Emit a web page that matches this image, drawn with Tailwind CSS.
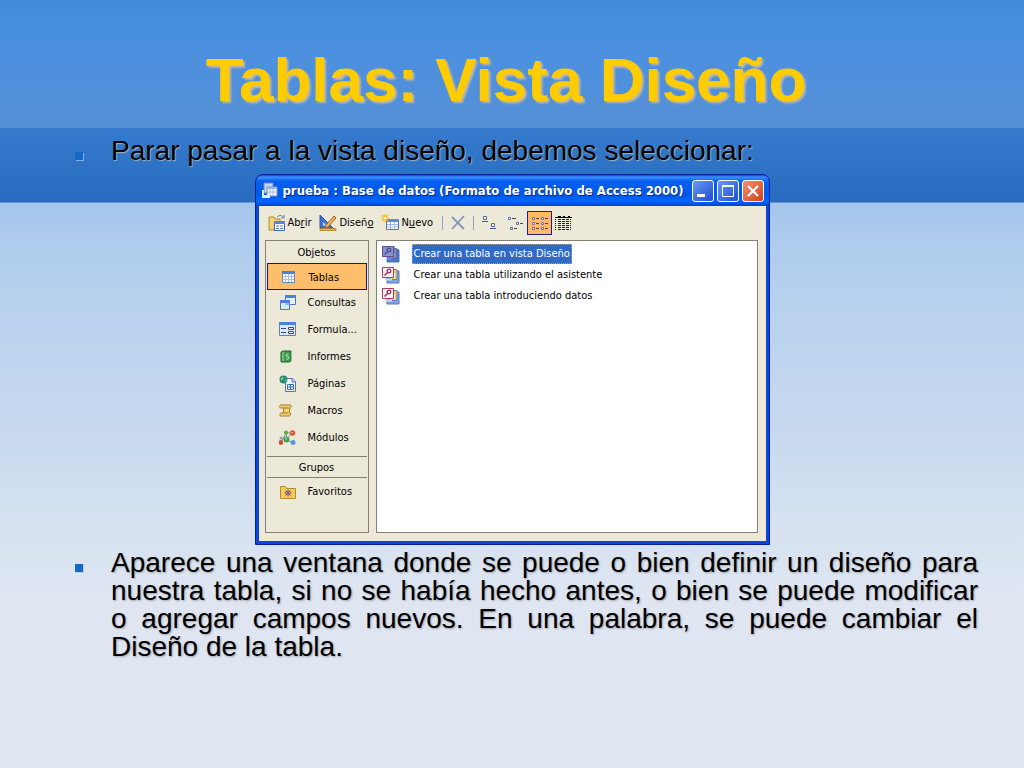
<!DOCTYPE html>
<html lang="es">
<head>
  <meta charset="UTF-8">
  <meta name="viewport" content="width=device-width, initial-scale=1.0">
  <title>Tablas: Vista Diseño</title>
  <script src="https://cdn.jsdelivr.net/npm/@tailwindcss/browser@4"></script>
</head>
<body class="min-h-screen overflow-x-hidden text-black font-['Liberation_Sans',Arial,sans-serif] bg-[linear-gradient(to_bottom,#428ada_0,#4a90e1_40px,#5590d6_128px,#367bce_128px,#286bbe_202px,#a6c5ec_203px,#b0cdee_250px,#c8d9ef_430px,#d6e2f0_530px,#dfe6f2_600px,#e0e6f2_100%)]">
  <!-- Shared icons -->
  <svg class="hidden" aria-hidden="true">
    <symbol id="wizard" viewBox="0 0 18 18">
      <path d="M5 5h12v12H5z" fill="#7ea4e4" stroke="#5478bc"/>
      <path d="M8 3.500h7v10H8z" fill="#f4cc60" stroke="#6c84b4"/>
      <path d="M8 8h5v4H8z" fill="#fffae8"/>
      <path d="M.500 1.500h11v10H.500z" fill="#fbf4f6" stroke="#b03a5c"/>
      <path d="M2.500 9.500l3-3" fill="none" stroke="#a02850" stroke-width="1.500"/>
      <circle cx="7" cy="5" r="1.800" fill="none" stroke="#a02850" stroke-width="1.300"/>
      <path d="M3 13.500h7" stroke="#c8d8f4" stroke-width="2"/>
    </symbol>
  </svg>

  <main class="pb-8">
    <!-- Slide title -->
    <h1 class="pt-10 pr-3 text-center text-[62px] leading-[80px] font-bold text-[#ffcc00] [text-shadow:2px_2px_2px_#c0b8a8]">Tablas: Vista Diseño</h1>

    <div class="pl-[75px] pr-[46px] pt-[17px]">
      <div class="flex items-start gap-7">
        <span class="mt-[15px] h-2 w-2 shrink-0 bg-[#1468c8] [box-shadow:1px_1px_0_#7fb0e6]"></span>
        <p class="text-[28px] leading-7 [text-shadow:1px_1px_1px_#a8b0b8]">Parar pasar a la vista diseño, debemos seleccionar:</p>
      </div>
    </div>

    <!-- Database window -->
    <section class="mx-auto mt-[9px] w-[515px] max-w-full rounded-t-lg border border-[#0420a0] bg-[#0a46d8] px-[3px] pb-[3px] font-['DejaVu_Sans_Condensed','DejaVu_Sans',sans-serif] text-[11px] leading-4">
      <header class="-mx-[3px] flex h-[31px] items-center rounded-t-[7px] bg-[linear-gradient(to_bottom,#0a48c8_0,#3a90ff_2px,#0860f0_6px,#0058e6_20px,#0066ff_26px,#0046c8_31px)] pl-[5px] pr-[5px] pt-px text-white">
        <svg class="h-[18px] w-[18px] shrink-0" viewBox="0 0 18 18">
          <path d="M3 1h9v10H3z" fill="#c4d4f0" stroke="#6f88b8"/>
          <path d="M6 5h10v9H6z" fill="#f4f7fc" stroke="#7890c0"/>
          <path d="M6 5h10v2H6z" fill="#98b4e4"/>
          <path d="M9 7v7M12 7v7M6 10h10" stroke="#a9bbdc"/>
          <path d="M1 8h2v8H1zM3 13h6v3H3z" fill="#e6ecf6"/>
        </svg>
        <h2 class="ml-1 flex-1 whitespace-nowrap text-[13px] font-bold [text-shadow:1px_1px_0_#0a2a80]">prueba : Base de datos (Formato de archivo de Access 2000)</h2>
        <div class="flex gap-[3px]">
          <button aria-label="Minimizar" class="h-[22px] w-[22px] rounded-[3px] border border-white bg-linear-to-br from-[#6c98f4] to-[#1c4cd0]">
            <svg viewBox="0 0 20 20"><path d="M4 13h8v3H4z" fill="#fff"/></svg>
          </button>
          <button aria-label="Maximizar" class="h-[22px] w-[22px] rounded-[3px] border border-white bg-linear-to-br from-[#6c98f4] to-[#1c4cd0]">
            <svg viewBox="0 0 20 20"><path d="M4.500 5v10.500h11V5M4 5h12" fill="none" stroke="#fff"/><path d="M4 4h12v2H4z" fill="#fff"/></svg>
          </button>
          <button aria-label="Cerrar" class="h-[22px] w-[22px] rounded-[3px] border border-white bg-linear-to-br from-[#f09070] to-[#d03c14]">
            <svg viewBox="0 0 20 20"><path d="M5 5l10 10M15 5L5 15" stroke="#fff" stroke-width="2.200"/></svg>
          </button>
        </div>
      </header>

      <div class="bg-[#ece9d8] pr-2 pb-2 pl-[6px]">
        <!-- Toolbar -->
        <div class="flex h-[34px] items-center pl-[3px]">
          <button class="flex items-center gap-[2px]">
            <svg class="h-[18px] w-[18px]" viewBox="0 0 18 18">
              <path d="M1 3h5l1 2h5v11H1z" fill="#f4d478" stroke="#b08a30"/>
              <path d="M9 3c2-2 5-2 6 0M16 1v3h-3" fill="none" stroke="#5878a8"/>
              <path d="M6.500 7.500h10v9h-10z" fill="#fff" stroke="#3c60b0"/>
              <path d="M6 7h11v3H6z" fill="#5a84d8"/>
              <path d="M8 12h3M12 12h3M8 14.500h3M12 14.500h3" stroke="#5a78b8"/>
            </svg>
            <span>Ab<u>r</u>ir</span>
          </button>
          <button class="ml-2 flex items-center gap-[2px]">
            <svg class="h-[18px] w-[18px]" viewBox="0 0 18 18">
              <path d="M1 1l13 13H1z" fill="#3f74d8" stroke="#2a50a8"/>
              <path d="M4 8l3.500 3.500H4z" fill="#c8daf8"/>
              <path d="M15 2l2 2-8 9-3 1 1-3z" fill="#f0b860" stroke="#a06420"/>
              <path d="M1 14.500h16v2H1z" fill="#eac04c" stroke="#a07820" stroke-width=".8"/>
            </svg>
            <span>Diseñ<u>o</u></span>
          </button>
          <button class="ml-2 flex items-center gap-[2px]">
            <svg class="h-[18px] w-[18px]" viewBox="0 0 18 18">
              <path d="M5.500 5.500h12v10h-12z" fill="#fff" stroke="#5078bc"/>
              <path d="M5 5h13v3H5z" fill="#5a8ae0"/>
              <path d="M9.500 8v7M13.500 8v7M6 10.500h11M6 13h11" stroke="#9bb8e8"/>
              <path d="M4 0v8M0 4h8M1 1l6 6M7 1L1 7" stroke="#f0b820" stroke-width="1.200"/>
              <circle cx="4" cy="4" r="1.500" fill="#fff8b0"/>
            </svg>
            <span>N<u>u</u>evo</span>
          </button>
          <span class="ml-[9px] h-[14px] w-px bg-[#8ca4cc]"></span>
          <button aria-label="Eliminar" class="ml-[7px]">
            <svg class="h-4 w-4" viewBox="0 0 16 16"><path d="M2 2l12 12M14 1L2 14" stroke="#8496b8" stroke-width="1.800"/></svg>
          </button>
          <span class="ml-[7px] h-[14px] w-px bg-[#8ca4cc]"></span>
          <button aria-label="Iconos grandes" class="ml-[7px]">
            <svg class="h-4 w-4" viewBox="0 0 16 16"><path d="M2.500 1.500h3v3h-3zM10.500 8.500h3v3h-3z" fill="#fff" stroke="#4a68b0"/><path d="M1 6.500h6M9 13.500h6" stroke="#4a5c88"/></svg>
          </button>
          <button aria-label="Iconos pequeños" class="ml-[10px]">
            <svg class="h-4 w-4" viewBox="0 0 16 16"><path d="M1.500 2.500h2v2h-2zM9.500 7.500h2v2h-2zM3.500 12.500h2v2h-2z" fill="#fff" stroke="#5a70b0"/><path d="M5 3.500h4M13 8.500h3M7 13.500h3" stroke="#444" /></svg>
          </button>
          <button aria-label="Lista" aria-pressed="true" class="ml-1 flex h-6 w-[25px] items-center justify-center border border-[#28207c] bg-[#fdb868]">
            <svg class="h-4 w-[18px]" viewBox="0 0 18 16"><path d="M1.500 2.500h2v2h-2zM10.500 2.500h2v2h-2zM1.500 7.500h2v2h-2zM10.500 7.500h2v2h-2zM1.500 12.500h2v2h-2zM10.500 12.500h2v2h-2z" fill="#fff" stroke="#766ca0"/><path d="M5 3.500h3M14 3.500h3M5 8.500h3M14 8.500h3M5 13.500h3M14 13.500h3" stroke="#5c4030"/></svg>
          </button>
          <button aria-label="Detalles" class="ml-[3px]">
            <svg class="h-4 w-[17px]" viewBox="0 0 17 16"><path d="M0 2.500h17" stroke="#000"/><path d="M3 1.500h3M8 1.500h2M13 1.500h2" stroke="#000"/><path d="M.500 4v11" stroke="#000" stroke-dasharray="1 1"/><path d="M3 4.500h13M3 6.500h13M3 8.500h13M3 10.500h13M3 12.500h13M3 14.500h13" stroke="#222" stroke-dasharray="3 1"/></svg>
          </button>
        </div>

        <div class="flex gap-[7px]">
          <!-- Object bar -->
          <nav class="flex h-[293px] w-[104px] flex-col border border-[#848078]">
            <h3 class="h-[22px] pt-1 text-center">Objetos</h3>
            <button class="mx-px flex h-[27px] items-center gap-3 border border-[#14148c] bg-[#ffbe6c] pt-[2px] pl-[13px]">
              <svg class="h-4 w-4" viewBox="0 0 16 16"><path d="M1.500 1.500h12v11h-12z" fill="#fff" stroke="#6484c0"/><path d="M1 1h13v3H1z" fill="#4c80dc"/><path d="M4.500 4v8M7.500 4v8M10.500 4v8M2 6.500h11M2 9.500h11" stroke="#a8c0ea"/></svg>
              Tablas
            </button>
            <div class="flex flex-col gap-[11px] pt-[5px]">
              <button class="flex h-4 items-center gap-[11px] pl-[13px]">
                <svg class="h-[18px] w-[18px]" viewBox="0 0 18 18"><path d="M6.500 1.500h10v9h-10z" fill="#eaf1fc" stroke="#5078bc"/><path d="M6 1h11v3H6z" fill="#4c80dc"/><path d="M1.500 6.500h9v9h-9z" fill="#d8e6fa" fill-opacity=".85" stroke="#5078bc"/><path d="M1 6h10v3H1z" fill="#4c80dc"/><path d="M6.500 9h4v2h-4z" fill="#90b4f0"/></svg>
                Consultas
              </button>
              <button class="flex h-4 items-center gap-[11px] pl-[13px]">
                <svg class="h-[18px] w-[18px]" viewBox="0 0 18 18"><path d="M.500 1.500h16v13H.500z" fill="#dce8fa" stroke="#6080b8"/><path d="M0 1h17v3H0z" fill="#4c80dc"/><path d="M2 7.500h5M2 11.500h5" stroke="#304c88"/><path d="M9.500 6.500h5v2h-5zM9.500 10.500h5v2h-5z" fill="#fff" stroke="#304c88"/></svg>
                Formula...
              </button>
              <button class="flex h-4 items-center gap-[11px] pl-[13px]">
                <svg class="h-[18px] w-[18px]" viewBox="0 0 18 18"><path d="M2 4l2-1h8v10l-2 1H2z" fill="#3d9c4c" stroke="#1c6428"/><path d="M4 4v9" stroke="#a6dca8"/><path d="M9.500 6c-3 0-3 2.500-1 2.500s2 3-1 2.500" fill="none" stroke="#e8f8d8"/><path d="M12.500 4v9" stroke="#a8b8a0"/></svg>
                Informes
              </button>
              <button class="flex h-4 items-center gap-[11px] pl-[13px]">
                <svg class="h-[18px] w-[18px]" viewBox="0 0 18 18"><path d="M6.500 3.500h7l3 3v10h-10z" fill="#f4f8fe" stroke="#5474b0"/><path d="M13 3.500v3.500h3.500" fill="#c8d8f4" stroke="#5474b0"/><path d="M8.500 9.500h6v5h-6zM11.500 9v6M8 12h7" fill="none" stroke="#4068bc"/><circle cx="4.500" cy="4.500" r="4" fill="#2c8c78"/><path d="M2 3c2-2 3 0 2 1s0 2-2 1M6 4l2 1-1 2z" fill="#80d090"/></svg>
                Páginas
              </button>
              <button class="flex h-4 items-center gap-[11px] pl-[13px]">
                <svg class="h-[18px] w-[18px]" viewBox="0 0 18 18"><path d="M2 3h9c2 0 1 3 0 3l-1 5h1c1 0 1 3-1 3H2c-2 0-1-3 0-3h2l1-5H2c-2 0-2-3 0-3z" fill="#f4d070" stroke="#a87820"/><path d="M5 6h5M4 11h5" stroke="#a87820"/></svg>
                Macros
              </button>
              <button class="flex h-4 items-center gap-[11px] pl-[13px]">
                <svg class="h-[18px] w-[18px]" viewBox="0 0 18 18"><path d="M2 14l5-10 7 0M2 9l5 2 6-7M7 4l1 7 6 3" fill="none" stroke="#8c8c98"/><circle cx="7" cy="3.500" r="2" fill="#58ac48"/><circle cx="13.500" cy="4" r="2.800" fill="#e05838"/><circle cx="1.800" cy="13.500" r="2.400" fill="#d84c34"/><circle cx="7.500" cy="10.500" r="3" fill="#48a050"/><circle cx="14" cy="13.500" r="2.500" fill="#5c94e0"/><circle cx="2" cy="9" r="1.500" fill="#80a4e0"/><circle cx="13" cy="3.500" r=".8" fill="#fcc8b8"/><circle cx="7" cy="9.500" r=".9" fill="#b8e8b0"/></svg>
                Módulos
              </button>
            </div>
            <h3 class="mx-px mt-[10px] h-[22px] border-y border-[#848078] pt-[3px] text-center">Grupos</h3>
            <button class="mt-[6px] flex h-4 items-center gap-[11px] pl-[13px]">
              <svg class="h-[18px] w-[18px]" viewBox="0 0 18 18"><path d="M1.500 3.500h5l1 2h9v10h-15z" fill="#f6cc58" stroke="#b88c28"/><path d="M9 6.500v7M5.500 10h7M6.500 7.500l5 5M11.500 7.500l-5 5" stroke="#344cb0"/><circle cx="9" cy="10" r="1.200" fill="#e04838"/></svg>
              Favoritos
            </button>
          </nav>

          <!-- Table list -->
          <ul class="flex flex-1 flex-col border border-[#848078] bg-white pt-[2px] pl-[5px]">
            <li class="flex h-[21px] items-center gap-3">
              <svg class="h-[18px] w-[18px]" viewBox="0 0 18 18"><use href="#wizard"/><path d="M0 1h13v3h4v13H5v-5H0z" fill="#3058b8" fill-opacity=".6"/></svg>
              <a href="#" class="bg-[#316ac5] px-[2px] py-[2px] text-white outline outline-dotted -outline-offset-1 outline-[#c8a060]">Crear una tabla en vista Diseño</a>
            </li>
            <li class="flex h-[21px] items-center gap-3">
              <svg class="h-[18px] w-[18px]"><use href="#wizard"/></svg>
              <a href="#" class="px-[2px]">Crear una tabla utilizando el asistente</a>
            </li>
            <li class="flex h-[21px] items-center gap-3">
              <svg class="h-[18px] w-[18px]"><use href="#wizard"/></svg>
              <a href="#" class="px-[2px]">Crear una tabla introduciendo datos</a>
            </li>
          </ul>
        </div>
      </div>
    </section>

    <div class="pl-[75px] pr-[46px] pt-1">
      <div class="flex items-start gap-7">
        <span class="mt-[15px] h-2 w-2 shrink-0 bg-[#1468c8] [box-shadow:1px_1px_0_#b8cce8]"></span>
        <p class="text-justify text-[28px] leading-7 [text-shadow:1px_1px_2px_#a0a4ac]">Aparece una ventana donde se puede o bien definir un diseño para nuestra tabla, si no se había hecho antes, o bien se puede modificar o agregar campos nuevos. En una palabra, se puede cambiar el Diseño de la tabla.</p>
      </div>
    </div>
  </main>
</body>
</html>
